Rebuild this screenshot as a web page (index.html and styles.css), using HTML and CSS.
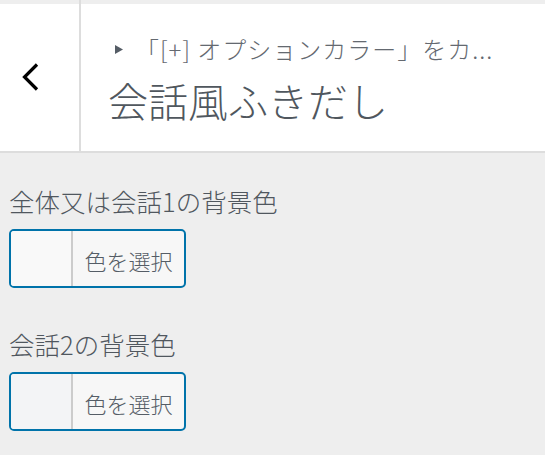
FILE: index.html
```html
<!DOCTYPE html>
<html lang="ja">
<head>
<meta charset="utf-8">
<link rel="stylesheet" href="styles.css">
</head>
<body>
<div class="header">
  <div class="back">
    <svg class="chev" width="17" height="28" viewBox="0 0 17 28"><path d="M15 1.5 L2.5 14 L15 26.5" fill="none" stroke="#000" stroke-width="3.2"/></svg>
  </div>
  <div class="titles">
    <div class="action"><svg class="tri" width="8" height="9" viewBox="0 0 8 9"><path d="M0 0 L8 4.5 L0 9 Z" fill="#555d66"/></svg><span class="crumb">「[+] オプションカラー」をカ...</span></div>
    <div class="title">会話風ふきだし</div>
  </div>
</div>
<div class="panel">
  <div class="control">
    <div class="label">全体又は会話1の背景色</div>
    <button class="picker"><span class="swatch sw1"></span><span class="pick-text">色を選択</span></button>
  </div>
  <div class="control">
    <div class="label">会話2の背景色</div>
    <button class="picker"><span class="swatch sw2"></span><span class="pick-text">色を選択</span></button>
  </div>
</div>
</body>
</html>
```

FILE: styles.css
```css
html, body {
  margin: 0;
  padding: 0;
}
body {
  width: 545px;
  height: 455px;
  overflow: hidden;
  background: #eeeeee;
  font-family: "Noto Sans CJK JP", "Noto Sans", sans-serif;
  font-weight: 300;
  color: #50575e;
}
.header {
  display: flex;
  gap: 2px;
  background: #dddddd;
  border-bottom: 2px solid #dddddd;
}
.back {
  width: 79px;
  flex: none;
  background: #fff;
  border-top: 4px solid #eeeeee;
  display: flex;
  align-items: center;
  padding-left: 22px;
  box-sizing: border-box;
  height: 151px;
}
.chev {
  display: block;
  margin-top: -1px;
}
.titles {
  flex: 1;
  min-width: 0;
  background: #fff;
  border-top: 4px solid #eeeeee;
  padding: 31px 0 0 27px;
  box-sizing: border-box;
  height: 151px;
}
.action {
  display: flex;
  align-items: center;
  height: 28px;
  padding-left: 7px;
  color: #646970;
  font-size: 24px;
  line-height: 28px;
  letter-spacing: 1px;
}
.tri {
  flex: none;
  display: block;
  margin-right: 12px;
}
.crumb {
  display: block;
  white-space: nowrap;
}
.title {
  margin-top: 13px;
  font-size: 40px;
  line-height: 48px;
  color: #50575e;
}
.panel {
  padding: 33px 0 0 9px;
}
.control {
  margin-bottom: 41px;
}
.label {
  font-size: 25.5px;
  line-height: 30px;
  margin-bottom: 13px;
}
.picker {
  display: flex;
  width: 177px;
  height: 59px;
  padding: 0;
  margin: 0;
  border: 2px solid #0073aa;
  border-radius: 5px;
  background: #f7f7f7;
  overflow: hidden;
  font-family: inherit;
  font-weight: inherit;
  box-sizing: border-box;
}
.swatch {
  width: 60px;
  height: 100%;
  flex: none;
  border-right: 2px solid #cccccc;
}
.sw1 { background: #f9f9f9; }
.sw2 { background: #f3f4f6; }
.pick-text {
  flex: 1;
  align-self: center;
  text-align: center;
  font-size: 22px;
  line-height: 26px;
  color: #555d66;
  margin-top: 2px;
}
```
